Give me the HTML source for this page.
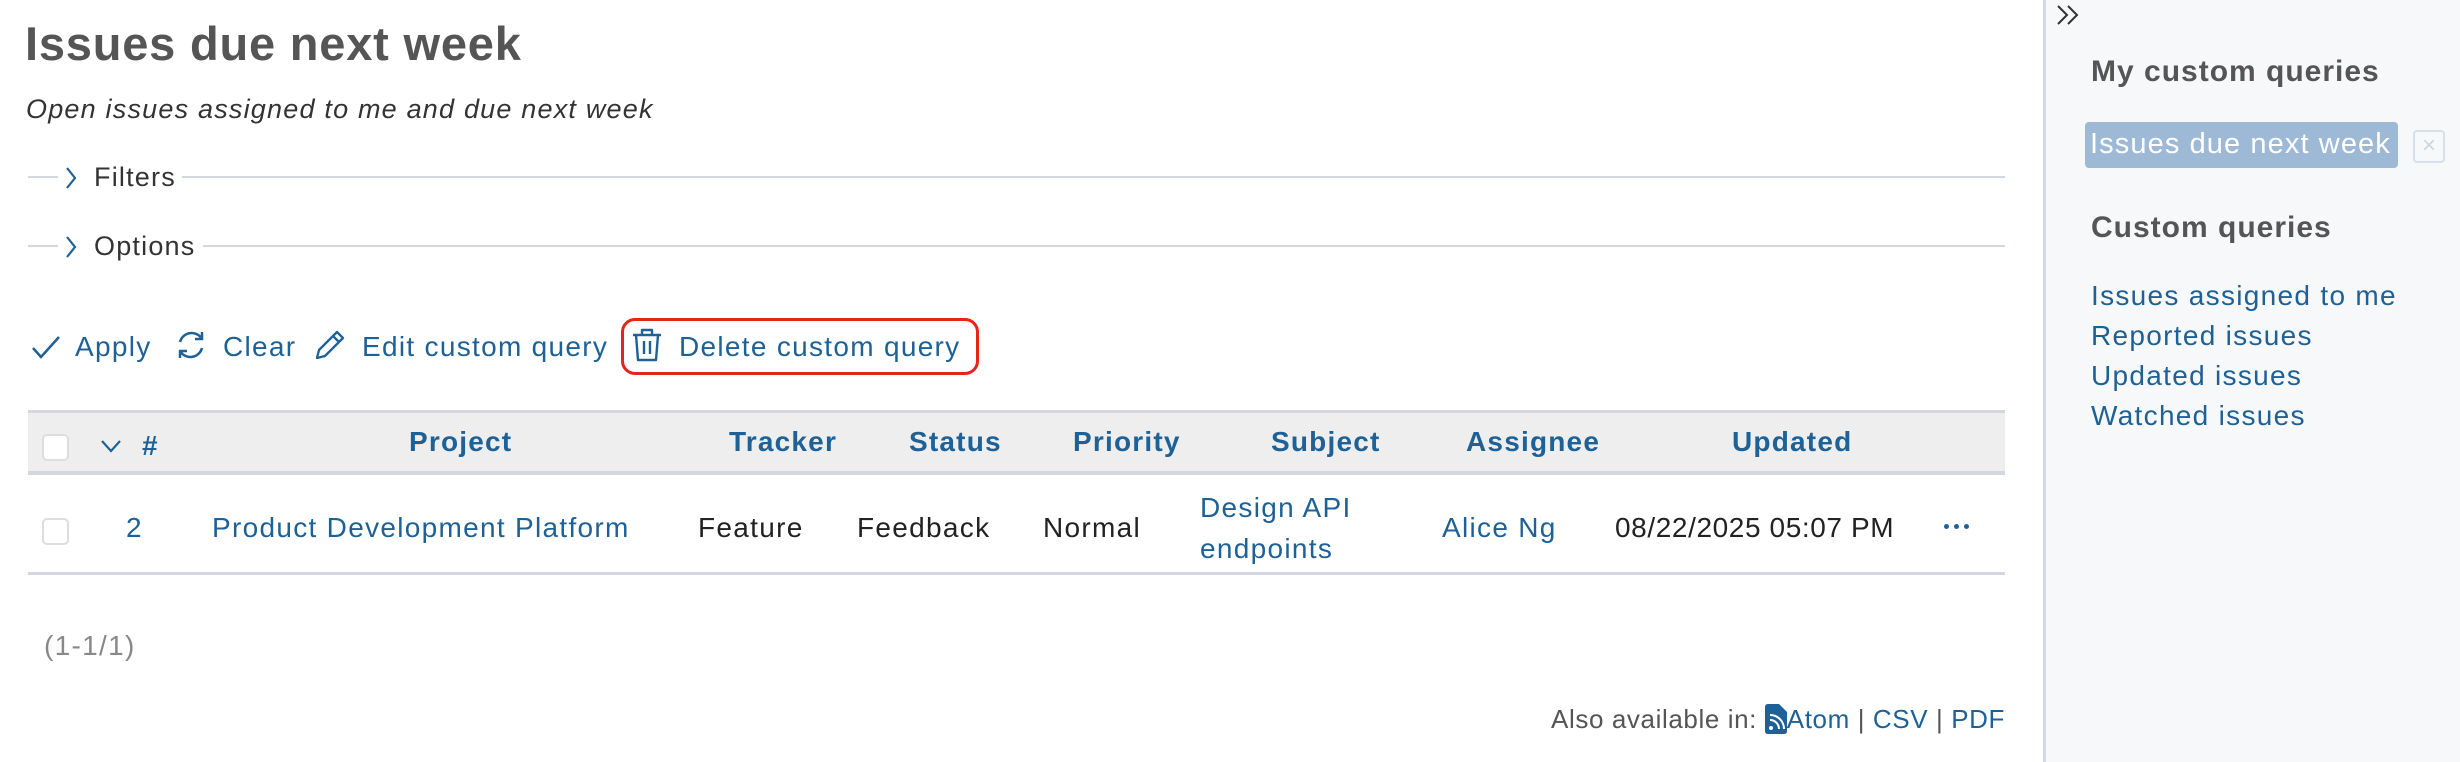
<!DOCTYPE html>
<html><head><meta charset="utf-8"><style>
*{margin:0;padding:0;box-sizing:border-box}
body{width:2460px;height:762px;background:#fff;font-family:"Liberation Sans",sans-serif;position:relative;overflow:hidden;color:#222}
.a{position:absolute;white-space:nowrap;line-height:1}
.l{color:#1d6197}
.h{color:#1d6197;font-weight:bold;font-size:28px;letter-spacing:1.2px}
.t{font-size:28px;letter-spacing:1.3px}
.cb{position:absolute;width:27px;height:27px;border:2px solid #ddd;border-radius:5px;background:#fff}
</style></head><body>
<div class="a" style="left:25px;top:20px;font-size:47px;font-weight:bold;color:#555;letter-spacing:0.8px">Issues due next week</div>
<div class="a" style="left:26px;top:96px;font-size:27px;font-style:italic;color:#333;letter-spacing:1.2px">Open issues assigned to me and due next week</div>

<div class="a" style="left:28px;top:176px;width:30px;height:2px;background:#d3d7df"></div>
<svg class="a" style="left:64px;top:165px" width="14" height="26" viewBox="0 0 14 26"><path d="M3 3 L11 13 L3 23" fill="none" stroke="#1d6197" stroke-width="2.2"/></svg>
<div class="a" style="left:94px;top:164px;font-size:27px;color:#333;letter-spacing:1.2px">Filters</div>
<div class="a" style="left:182px;top:176px;width:1823px;height:2px;background:#d3d7df"></div>

<div class="a" style="left:28px;top:245px;width:30px;height:2px;background:#d3d7df"></div>
<svg class="a" style="left:64px;top:234px" width="14" height="26" viewBox="0 0 14 26"><path d="M3 3 L11 13 L3 23" fill="none" stroke="#1d6197" stroke-width="2.2"/></svg>
<div class="a" style="left:94px;top:233px;font-size:27px;color:#333;letter-spacing:1.2px">Options</div>
<div class="a" style="left:203px;top:245px;width:1802px;height:2px;background:#d3d7df"></div>

<svg class="a" style="left:30px;top:332px" width="32" height="30" viewBox="0 0 32 30"><path d="M3 16 L11 25 L29 5" fill="none" stroke="#1d6197" stroke-width="2.5"/></svg>
<div class="a l t" style="left:75px;top:333px">Apply</div>
<svg class="a" style="left:174px;top:328px" width="34" height="34" viewBox="0 0 34 34"><path d="M6 14 A12 12 0 0 1 28 11 M28 20 A12 12 0 0 1 6 23 M28 4 V11 H21 M6 30 V23 H13" fill="none" stroke="#1d6197" stroke-width="2.5"/></svg>
<div class="a l t" style="left:223px;top:333px">Clear</div>
<svg class="a" style="left:313px;top:328px" width="34" height="34" viewBox="0 0 34 34"><path d="M4 30 L6 22 L24 4 L30 10 L12 28 Z M20 8 L26 14" fill="none" stroke="#1d6197" stroke-width="2.3" stroke-linejoin="round"/></svg>
<div class="a l t" style="left:362px;top:333px">Edit custom query</div>
<div class="a" style="left:621px;top:318px;width:358px;height:57px;border:3px solid #e8241a;border-radius:14px"></div>
<svg class="a" style="left:630px;top:326px" width="34" height="38" viewBox="0 0 34 38"><path d="M3 9 H31 M12 9 V4 H22 V9 M6 9 L8 34 H26 L28 9 M14 15 V28 M20 15 V28" fill="none" stroke="#1d6197" stroke-width="2.4" stroke-linejoin="round"/></svg>
<div class="a l t" style="left:679px;top:333px">Delete custom query</div>

<div class="a" style="left:28px;top:410px;width:1977px;height:65px;background:#eee;border-top:3px solid #d3d7e0;border-bottom:4px solid #d3d7e0"></div>
<div class="cb" style="left:42px;top:434px"></div>
<svg class="a" style="left:100px;top:438px" width="22" height="16" viewBox="0 0 22 16"><path d="M2 3 L11 13 L20 3" fill="none" stroke="#1d6197" stroke-width="2.2"/></svg>
<div class="a h" style="left:142px;top:432px">#</div>
<div class="a h" style="left:409px;top:428px">Project</div>
<div class="a h" style="left:729px;top:428px">Tracker</div>
<div class="a h" style="left:909px;top:428px">Status</div>
<div class="a h" style="left:1073px;top:428px">Priority</div>
<div class="a h" style="left:1271px;top:428px">Subject</div>
<div class="a h" style="left:1466px;top:428px">Assignee</div>
<div class="a h" style="left:1732px;top:428px">Updated</div>

<div class="cb" style="left:42px;top:518px"></div>
<div class="a l t" style="left:126px;top:514px">2</div>
<div class="a l t" style="left:212px;top:514px">Product Development Platform</div>
<div class="a t" style="left:698px;top:514px">Feature</div>
<div class="a t" style="left:857px;top:514px">Feedback</div>
<div class="a t" style="left:1043px;top:514px">Normal</div>
<div class="a l t" style="left:1200px;top:494px">Design API</div>
<div class="a l t" style="left:1200px;top:535px">endpoints</div>
<div class="a l t" style="left:1442px;top:514px">Alice Ng</div>
<div class="a t" style="left:1615px;top:514px;letter-spacing:0.6px">08/22/2025 05:07 PM</div>
<div class="a" style="left:1944px;top:524px;width:5px;height:5px;border-radius:50%;background:#1d6197;box-shadow:10px 0 #1d6197,20px 0 #1d6197"></div>
<div class="a" style="left:28px;top:572px;width:1977px;height:3px;background:#d3d7e0"></div>

<div class="a t" style="left:44px;top:632px;color:#888">(1-1/1)</div>
<div class="a" style="right:455px;top:704px;font-size:26px;color:#555;letter-spacing:0.6px">Also available in: <svg width="22" height="30" viewBox="0 0 22 30" style="vertical-align:-6px"><path d="M0 3 Q0 0 3 0 H14 L22 8 V27 Q22 30 19 30 H3 Q0 30 0 27 Z" fill="#1d6197"/><circle cx="6" cy="24" r="2" fill="#fff"/><path d="M5 16 A9 9 0 0 1 14 25 M5 11 A14 14 0 0 1 19 25" fill="none" stroke="#fff" stroke-width="2"/></svg><span class="l">Atom</span> | <span class="l">CSV</span> | <span class="l">PDF</span></div>

<div class="a" style="left:2043px;top:0;width:417px;height:762px;background:#f7f8fa;border-left:3px solid #d3d9e2"></div>
<svg class="a" style="left:2056px;top:4px" width="26" height="22" viewBox="0 0 26 22"><path d="M2 2 L11 11 L2 20 M12 2 L21 11 L12 20" fill="none" stroke="#333" stroke-width="2"/></svg>
<div class="a" style="left:2091px;top:57px;font-size:30px;font-weight:bold;color:#555;letter-spacing:1px">My custom queries</div>
<div class="a" style="left:2085px;top:122px;width:313px;height:46px;background:#9db9d5;border-radius:4px"></div>
<div class="a" style="left:2090px;top:130px;font-size:29px;color:#fff;letter-spacing:1.1px">Issues due next week</div>
<div class="a" style="left:2413px;top:130px;width:32px;height:33px;border:2px solid #d6e0ea;border-radius:4px;color:#ccd6e0;font-size:24px;text-align:center;line-height:28px">×</div>
<div class="a" style="left:2091px;top:213px;font-size:30px;font-weight:bold;color:#555;letter-spacing:1px">Custom queries</div>
<div class="a l t" style="left:2091px;top:282px">Issues assigned to me</div>
<div class="a l t" style="left:2091px;top:322px">Reported issues</div>
<div class="a l t" style="left:2091px;top:362px">Updated issues</div>
<div class="a l t" style="left:2091px;top:402px">Watched issues</div>
</body></html>
